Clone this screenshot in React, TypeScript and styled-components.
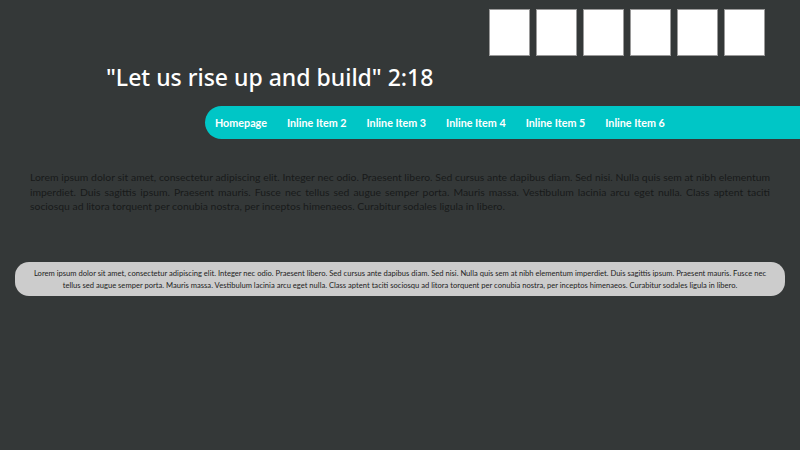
import React from 'react';
import styled, { createGlobalStyle } from 'styled-components';

const GlobalStyle = createGlobalStyle`
  html, body {
    margin: 0;
    padding: 0;
    background: #343838;
    font-family: 'Noto Sans', 'Open Sans', sans-serif;
  }
`;

const Page = styled.div`
  width: 800px;
  height: 450px;
  overflow: hidden;
`;

const TileRow = styled.div`
  display: flex;
  justify-content: flex-end;
  gap: 6px;
  padding: 9px 35px 0 0;
`;

const Tile = styled.div`
  width: 39px;
  height: 45px;
  background: #ffffff;
  border: 1px solid #9a9a9a;
`;

const Title = styled.h1`
  margin: 5px 0 0 106px;
  font-size: 23px;
  font-weight: 500;
  color: #ffffff;
  line-height: 32px;
`;

const Nav = styled.nav`
  display: flex;
  align-items: center;
  gap: 20px;
  height: 33px;
  margin: 13px 0 0 205px;
  padding-left: 10px;
  background: #00c6c6;
  border-radius: 17px 0 0 17px;
`;

const NavItem = styled.a`
  font-family: Lato, 'Noto Sans', sans-serif;
  color: #ffffff;
  font-size: 10.75px;
  font-weight: 700;
  text-decoration: none;
`;

const Body = styled.p`
  margin: 31px 30px 0 30px;
  font-family: Lato, 'Noto Sans', sans-serif;
  font-size: 10.4px;
  line-height: 14.5px;
  color: #181a1a;
  text-align: justify;
`;

const Callout = styled.div`
  margin: 48px 15px 0 15px;
  padding: 5px 12px;
  background: #cccccc;
  border-radius: 14px;
  font-family: Lato, 'Noto Sans', sans-serif;
  font-size: 7.6px;
  line-height: 12px;
  color: #1e1e1e;
  text-align: center;
`;

const lorem =
  'Lorem ipsum dolor sit amet, consectetur adipiscing elit. Integer nec odio. Praesent libero. Sed cursus ante dapibus diam. Sed nisi. Nulla quis sem at nibh elementum imperdiet. Duis sagittis ipsum. Praesent mauris. Fusce nec tellus sed augue semper porta. Mauris massa. Vestibulum lacinia arcu eget nulla. Class aptent taciti sociosqu ad litora torquent per conubia nostra, per inceptos himenaeos. Curabitur sodales ligula in libero.';

const navItems = [
  'Homepage',
  'Inline Item 2',
  'Inline Item 3',
  'Inline Item 4',
  'Inline Item 5',
  'Inline Item 6',
];

const App = () => {
  return (
    <Page>
      <GlobalStyle />
      <TileRow>
        {[1, 2, 3, 4, 5, 6].map((n) => (
          <Tile key={n} />
        ))}
      </TileRow>
      <Title>"Let us rise up and build" 2:18</Title>
      <Nav>
        {navItems.map((item) => (
          <NavItem key={item} href='#'>
            {item}
          </NavItem>
        ))}
      </Nav>
      <Body>{lorem}</Body>
      <Callout>{lorem}</Callout>
    </Page>
  );
};

export default App;
